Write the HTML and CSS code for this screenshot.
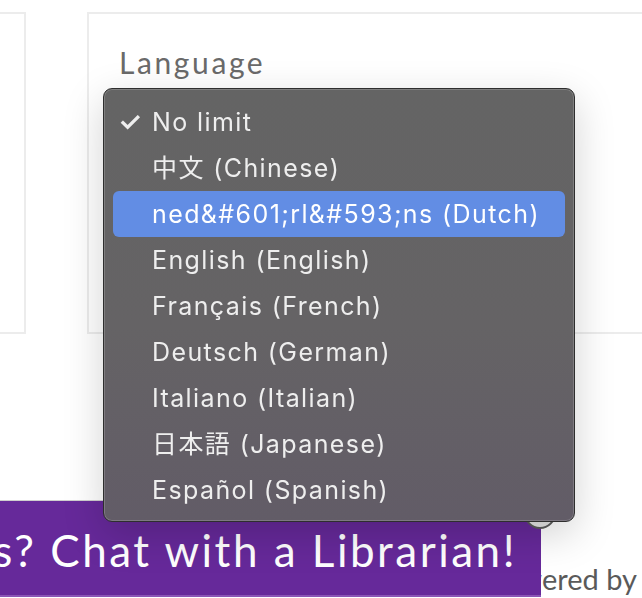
FILE: index.html
```html
<!DOCTYPE html>
<html lang="en">
<head>
<meta charset="utf-8">
<title>Language</title>
<link rel="stylesheet" href="styles.css">
</head>
<body>
<div class="page">
  <div class="cards">
    <section class="card card-left"></section>
    <section class="card card-main">
      <label class="label">Language</label>
      <div class="menu">
        <div class="item checked"><span class="check">✓</span>No limit</div>
        <div class="item">中文 (Chinese)</div>
        <div class="item active">ned&amp;#601;rl&amp;#593;ns (Dutch)</div>
        <div class="item">English (English)</div>
        <div class="item">Français (French)</div>
        <div class="item">Deutsch (German)</div>
        <div class="item">Italiano (Italian)</div>
        <div class="item">日本語 (Japanese)</div>
        <div class="item">Español (Spanish)</div>
      </div>
    </section>
  </div>
  <footer class="footer">Powered by</footer>
</div>
<div class="chat">
  <span class="chat-text">Questions? Chat with a Librarian!</span>
</div>
<div class="chat-close"></div>
</body>
</html>
```
FILE: styles.css
```css
html, body {
  margin: 0;
  padding: 0;
  background: #ffffff;
  overflow: hidden;
  width: 642px;
  height: 598px;
}

.page {
  padding-top: 12px;
  font-family: Lato, "Noto Sans", sans-serif;
}

.cards {
  display: flex;
  gap: 61px;
  height: 322px;
}

.card {
  box-sizing: border-box;
  border: 2px solid #ececec;
  background: #fff;
  flex: none;
}

.card-left {
  width: 36px;
  margin-left: -10px;
}

.card-main {
  width: 620px;
  position: relative;
  padding: 30px 0 0 30px;
}

.label {
  display: block;
  font-size: 30px;
  line-height: 36px;
  color: #6a6a6a;
  letter-spacing: 2.6px;
}

.menu {
  position: absolute;
  left: 14px;
  top: 74px;
  width: 472px;
  height: 434px;
  box-sizing: border-box;
  border: 1px solid #2e2e2e;
  border-radius: 9px;
  background: linear-gradient(180deg, #646464 0%, #656365 55%, #625c67 100%);
  box-shadow: inset 0 0 0 1px rgba(255,255,255,0.18), 0 12px 40px rgba(0,0,0,0.18);
  padding: 10px 9px;
  z-index: 5;
  font-family: Inter, "Noto Sans", "Noto Sans CJK JP", sans-serif;
}

.item {
  position: relative;
  height: 46px;
  line-height: 46px;
  padding-left: 39px;
  font-size: 25px;
  letter-spacing: 1.4px;
  color: #eeeeee;
  border-radius: 6px;
  white-space: nowrap;
}

.item.active {
  background: #628de4;
  color: #ffffff;
}

.check {
  position: absolute;
  left: 5px;
  top: 0;
  font-size: 27px;
  font-weight: 600;
  letter-spacing: 0;
}

.footer {
  text-align: right;
  padding-right: 5px;
  margin-top: 227px;
  font-size: 29px;
  color: #5a5a5a;
}

.chat {
  position: fixed;
  left: 0;
  top: 500px;
  width: 541px;
  height: 97px;
  box-sizing: border-box;
  border-top: 1px solid #cfcfcf;
  border-bottom: 2px solid #8a55b5;
  background: #66299a;
  display: flex;
  justify-content: flex-end;
  align-items: center;
  overflow: hidden;
  padding-right: 24px;
  padding-top: 3px;
  z-index: 2;
}

.chat-text {
  flex: none;
  white-space: nowrap;
  font-family: Lato, "Noto Sans", sans-serif;
  font-size: 44px;
  letter-spacing: 2.5px;
  color: #ffffff;
}

.chat-close {
  position: fixed;
  left: 524px;
  top: 497px;
  width: 32px;
  height: 32px;
  box-sizing: border-box;
  border-radius: 50%;
  border: 2px solid #5c5c5c;
  background: #e6e6e6;
  z-index: 3;
}
```
